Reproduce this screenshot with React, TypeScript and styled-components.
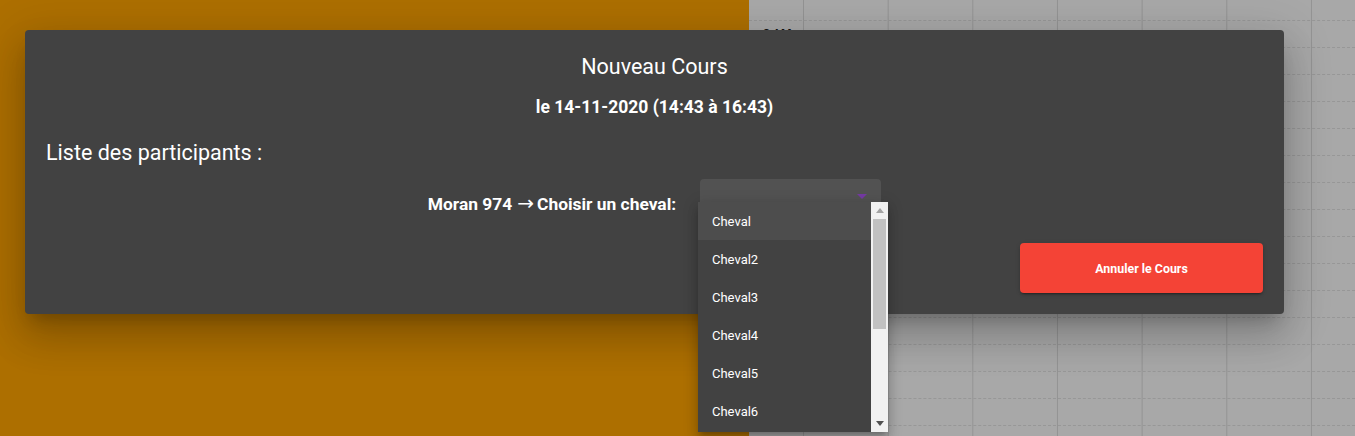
import styled, { createGlobalStyle } from "styled-components";

const GlobalStyle = createGlobalStyle`
  * { box-sizing: border-box; }
  html, body { margin: 0; padding: 0; }
  body {
    font-family: Roboto, "Liberation Sans", Arial, sans-serif;
    width: 1355px;
    height: 436px;
    overflow: hidden;
  }
`;

const Page = styled.div`
  position: relative;
  width: 1355px;
  height: 436px;
  display: flex;
  overflow: hidden;
`;

const OrangePanel = styled.div`
  width: 749px;
  background: #ad6f00;
`;

const Calendar = styled.div`
  flex: 1;
  background-color: #a8a8a8;
  background-image: linear-gradient(to right, #939393 1px, transparent 1px);
  background-size: 84.67px 100%;
  background-position: 54px 0;
  display: flex;
  flex-direction: column;
`;

const Slot = styled.div<{ $first?: boolean }>`
  height: ${(p) => (p.$first ? "21px" : "27px")};
  border-bottom: 1px dashed #979797;
  padding-left: 14px;
  font-size: 12px;
  font-weight: bold;
  color: #111;
  line-height: 26px;
`;

const Modal = styled.div`
  position: absolute;
  left: 25px;
  top: 30px;
  width: 1259px;
  height: 284px;
  background: #424242;
  border-radius: 4px;
  box-shadow: 0 11px 15px -7px rgba(0, 0, 0, 0.2),
    0 24px 38px 3px rgba(0, 0, 0, 0.14), 0 9px 46px 8px rgba(0, 0, 0, 0.12);
  padding: 25px 21px 21px;
  display: flex;
  flex-direction: column;
  color: #fff;
`;

const Title = styled.h2`
  margin: 0;
  font-size: 21.5px;
  font-weight: 400;
  line-height: 24px;
  text-align: center;
`;

const Subtitle = styled.h3`
  margin: 18px 0 0;
  font-size: 17.5px;
  font-weight: 700;
  line-height: 20px;
  text-align: center;
`;

const SectionTitle = styled.h3`
  margin: 24px 0 0;
  font-size: 21.5px;
  font-weight: 400;
  line-height: 24px;
`;

const ParticipantRow = styled.div`
  margin-top: 14px;
  display: flex;
  justify-content: center;
  align-items: flex-start;
  gap: 24px;
`;

const ParticipantLabel = styled.span`
  font-size: 17.4px;
  font-weight: 700;
  line-height: 20px;
  margin-top: 15px;
  white-space: nowrap;
`;

const Arrow = styled.span`
  font-family: "DejaVu Sans", sans-serif;
  font-weight: 400;
  font-size: 20px;
  line-height: 0;
  margin: 0 3px 0 5px;
`;

const SelectBox = styled.div`
  position: relative;
  width: 181px;
  height: 36px;
  background: #525252;
  border-radius: 4px 4px 0 0;
  display: flex;
  justify-content: flex-end;
  align-items: center;
  padding-right: 14px;
`;

const Footer = styled.div`
  margin-top: 28px;
  display: flex;
  justify-content: flex-end;
`;

const CancelButton = styled.button`
  width: 243px;
  height: 50px;
  border: none;
  border-radius: 4px;
  background: #f44336;
  color: #fff;
  font-family: Roboto, "Liberation Sans", Arial, sans-serif;
  font-size: 12.4px;
  font-weight: 700;
  box-shadow: 0 3px 1px -2px rgba(0, 0, 0, 0.2), 0 2px 2px 0 rgba(0, 0, 0, 0.14),
    0 1px 5px 0 rgba(0, 0, 0, 0.12);
`;

const Menu = styled.div`
  position: absolute;
  left: 698px;
  top: 202px;
  width: 190px;
  height: 230px;
  background: #424242;
  display: flex;
  box-shadow: 0 5px 5px -3px rgba(0, 0, 0, 0.2), 0 8px 10px 1px rgba(0, 0, 0, 0.14),
    0 3px 14px 2px rgba(0, 0, 0, 0.12);
  overflow: hidden;
`;

const MenuList = styled.ul`
  flex: 1;
  margin: 0;
  padding: 0;
  list-style: none;
`;

const MenuItem = styled.li<{ $active?: boolean }>`
  height: 38px;
  line-height: 39px;
  padding-left: 14px;
  font-size: 13px;
  color: #fff;
  background: ${(p) => (p.$active ? "#4d4d4d" : "transparent")};
`;

const Scrollbar = styled.div`
  width: 17px;
  background: #f1f1f1;
  display: flex;
  flex-direction: column;
  align-items: center;
`;

const ScrollArrow = styled.div`
  height: 17px;
  display: flex;
  align-items: center;
  justify-content: center;
`;

const ScrollTrack = styled.div`
  flex: 1;
  width: 100%;
  padding: 0 2px;
`;

const ScrollThumb = styled.div`
  height: 110px;
  background: #c1c1c1;
`;

const horses = ["Cheval", "Cheval2", "Cheval3", "Cheval4", "Cheval5", "Cheval6"];

const App = () => {
  return (
    <>
      <GlobalStyle />
      <Page>
        <OrangePanel />
        <Calendar>
          <Slot $first />
          <Slot>8 AM</Slot>
          {Array.from({ length: 14 }).map((_, i) => (
            <Slot key={i} />
          ))}
        </Calendar>

        <Modal>
          <Title>Nouveau Cours</Title>
          <Subtitle>le 14-11-2020 (14:43 à 16:43)</Subtitle>
          <SectionTitle>Liste des participants :</SectionTitle>
          <ParticipantRow>
            <ParticipantLabel>
              Moran 974<Arrow>→</Arrow>Choisir un cheval:
            </ParticipantLabel>
            <SelectBox>
              <svg width="10" height="6" viewBox="0 0 10 6">
                <path d="M0 0 L10 0 L5 5 Z" fill="#7a35b0" opacity="0.85" />
              </svg>
            </SelectBox>
          </ParticipantRow>
          <Footer>
            <CancelButton>Annuler le Cours</CancelButton>
          </Footer>
        </Modal>

        <Menu>
          <MenuList>
            {horses.map((h, i) => (
              <MenuItem key={h} $active={i === 0}>
                {h}
              </MenuItem>
            ))}
          </MenuList>
          <Scrollbar>
            <ScrollArrow>
              <svg width="8" height="5" viewBox="0 0 8 5">
                <path d="M0 5 L8 5 L4 0 Z" fill="#a3a3a3" />
              </svg>
            </ScrollArrow>
            <ScrollTrack>
              <ScrollThumb />
            </ScrollTrack>
            <ScrollArrow>
              <svg width="8" height="5" viewBox="0 0 8 5">
                <path d="M0 0 L8 0 L4 5 Z" fill="#505050" />
              </svg>
            </ScrollArrow>
          </Scrollbar>
        </Menu>
      </Page>
    </>
  );
};

export default App;
